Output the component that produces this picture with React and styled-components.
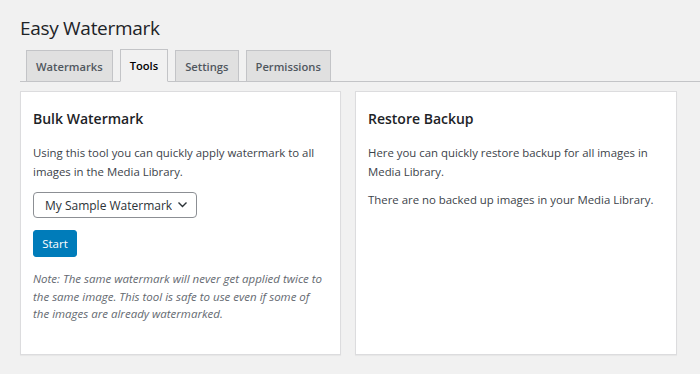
import React from 'react';
import styled, { createGlobalStyle } from 'styled-components';

const GlobalStyle = createGlobalStyle`
  html, body {
    margin: 0;
    padding: 0;
    background: #f1f1f1;
  }
  body {
    font-family: "Open Sans", "Noto Sans", sans-serif;
    color: #3c434a;
  }
`;

const Wrap = styled.div`
  padding: 15px 23px 20px 20px;
  width: 700px;
  box-sizing: border-box;
`;

const Title = styled.h1`
  margin: 0 0 8px 0;
  font-size: 19px;
  font-weight: 400;
  letter-spacing: -0.3px;
  line-height: 26px;
  color: #1d2327;
`;

const TabBar = styled.div`
  display: flex;
  gap: 7px;
  padding-left: 6px;
  margin-right: -23px;
  border-bottom: 1px solid #c3c4c7;
  align-items: flex-end;
`;

const Tab = styled.div`
  box-sizing: border-box;
  height: ${p => (p.active ? '33px' : '32px')};
  margin-bottom: -1px;
  padding: 0 9px;
  display: flex;
  align-items: center;
  border: 1px solid #c3c4c7;
  border-bottom: ${p => (p.active ? '1px solid #f1f1f1' : '1px solid #c3c4c7')};
  background: ${p => (p.active ? '#f1f1f1' : '#e0e0e0')};
  color: ${p => (p.active ? '#000' : '#50575e')};
  font-size: 11.2px;
  font-weight: 600;
`;

const Columns = styled.div`
  display: grid;
  grid-template-columns: 321px 322px;
  gap: 14px;
  margin-top: 9px;
`;

const Card = styled.div`
  background: #fff;
  border: 1px solid #dcdcde;
  box-shadow: 0 1px 1px rgba(0, 0, 0, 0.04);
  height: 264px;
  box-sizing: border-box;
  padding: 16px 12px;
`;

const CardTitle = styled.h2`
  margin: 0 0 14px 0;
  font-size: 14px;
  font-weight: 600;
  line-height: 22px;
  color: #1d2327;
`;

const Text = styled.p`
  margin: 0 0 ${p => (p.gap === undefined ? 10 : p.gap)}px 0;
  font-size: 11.4px;
  line-height: 18.5px;
  color: #3c434a;
`;

const Note = styled.p`
  margin: 13px 0 0 0;
  font-size: 11.5px;
  line-height: 17.5px;
  font-style: italic;
  color: #646970;
`;

const SelectBox = styled.div`
  position: relative;
  width: 164px;
  height: 26px;
  margin-top: 11px;
`;

const Select = styled.select`
  appearance: none;
  width: 100%;
  height: 100%;
  box-sizing: border-box;
  border: 1px solid #8c8f94;
  border-radius: 4px;
  background: #fff;
  padding: 0 24px 0 11px;
  font-family: "Open Sans", "Noto Sans", sans-serif;
  font-size: 12px;
  color: #2c3338;
`;

const Chevron = styled.svg`
  position: absolute;
  right: 9px;
  top: 8px;
  pointer-events: none;
`;

const Button = styled.button`
  display: block;
  margin-top: 12px;
  width: 44px;
  height: 27px;
  border: 1px solid #007cba;
  border-radius: 3px;
  background: #007cba;
  color: #fff;
  font-family: "Open Sans", "Noto Sans", sans-serif;
  font-size: 11.5px;
  padding: 0;
`;

export default function App() {
  return (
    <>
      <GlobalStyle />
      <Wrap>
        <Title>Easy Watermark</Title>
        <TabBar>
          <Tab>Watermarks</Tab>
          <Tab active>Tools</Tab>
          <Tab>Settings</Tab>
          <Tab>Permissions</Tab>
        </TabBar>
        <Columns>
          <Card>
            <CardTitle>Bulk Watermark</CardTitle>
            <Text gap={0}>
              Using this tool you can quickly apply watermark to all images in the Media Library.
            </Text>
            <SelectBox>
              <Select defaultValue="sample">
                <option value="sample">My Sample Watermark</option>
              </Select>
              <Chevron width="11" height="9" viewBox="0 0 11 9">
                <path d="M1.5 2.5 L5.5 6.5 L9.5 2.5" fill="none" stroke="#2c3338" strokeWidth="1.4" />
              </Chevron>
            </SelectBox>
            <Button>Start</Button>
            <Note>
              Note: The same watermark will never get applied twice to the same image. This tool is safe to use even if some of the images are already watermarked.
            </Note>
          </Card>
          <Card>
            <CardTitle>Restore Backup</CardTitle>
            <Text>Here you can quickly restore backup for all images in Media Library.</Text>
            <Text>There are no backed up images in your Media Library.</Text>
          </Card>
        </Columns>
      </Wrap>
    </>
  );
}
